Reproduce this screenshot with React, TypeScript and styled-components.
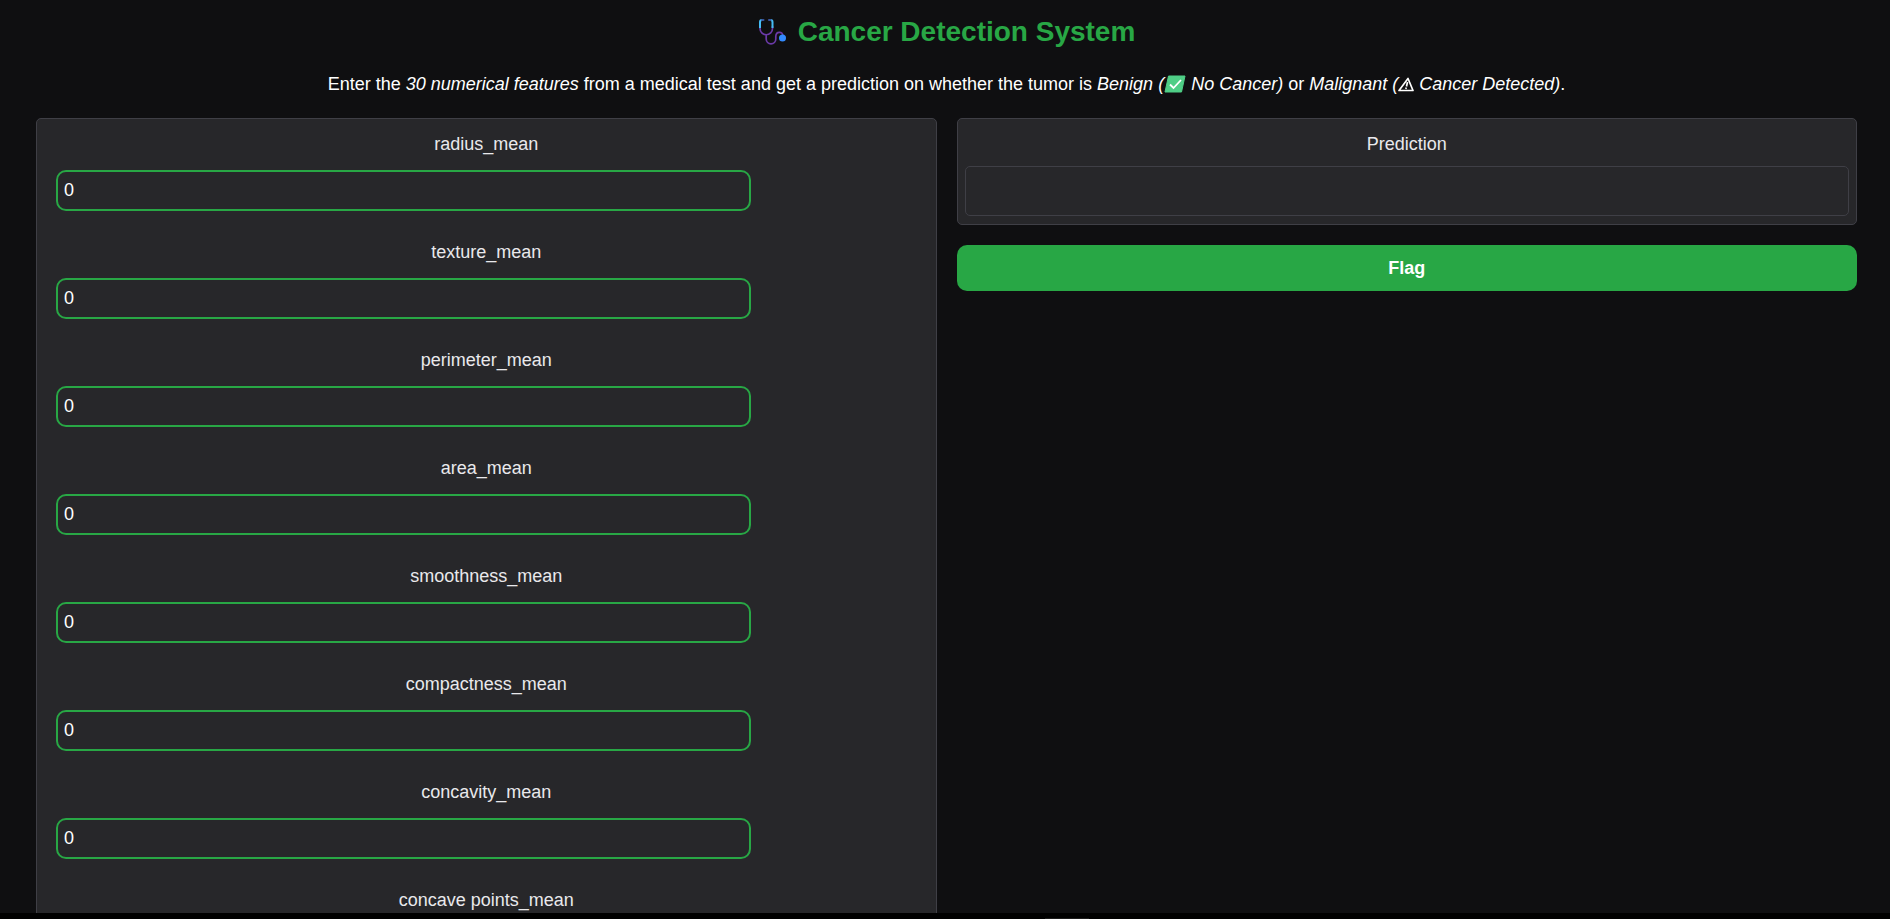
import React from "react";
import styled, { createGlobalStyle } from "styled-components";

const GlobalStyle = createGlobalStyle`
  *, *::before, *::after { box-sizing: border-box; }
  body {
    margin: 0;
    background: #000;
    color: #fff;
    font-family: "Liberation Sans", Arial, sans-serif;
  }
`;

const Shell = styled.div`
  display: flex;
  flex-direction: column;
  height: 100vh;
`;

const Page = styled.main`
  flex: 1;
  min-height: 0;
  overflow-y: auto;
  scrollbar-width: none;
  padding: 12px 33px 0 36px;
  background: #0f0f11;
`;

const BottomBar = styled.footer`
  display: flex;
  flex: none;
  align-items: flex-end;
  justify-content: center;
  height: 6px;
  padding-left: 244px;
  background: #000;
`;

const Handle = styled.span`
  width: 44px;
  height: 1px;
  background: #1c1c1c;
`;

const Title = styled.h1`
  display: flex;
  align-items: center;
  justify-content: center;
  gap: 12px;
  margin: 0;
  color: #28a745;
  font-size: 28px;
  line-height: 40px;
`;

const Intro = styled.p`
  margin: 18px 0 20px;
  font-size: 18px;
  line-height: 28px;
  text-align: center;
`;

const Columns = styled.div`
  display: grid;
  grid-template-columns: 1fr 1fr;
  align-items: start;
  gap: 20px;
`;

const Panel = styled.div`
  border: 1px solid #3f3f46;
  border-radius: 5px;
  background: #27272a;
`;

const FieldList = styled(Panel)`
  display: grid;
  gap: 30px;
  padding: 11px 19px 20px;
`;

const Label = styled.label`
  display: block;
  color: #e9e9ec;
  font-size: 18px;
  line-height: 28px;
  text-align: center;
`;

const NumberInput = styled.input`
  display: block;
  width: calc(80% + 7px);
  height: 41px;
  margin-top: 12px;
  padding: 0 6px;
  border: 2px solid #28a745;
  border-radius: 10px;
  background: #27272a;
  color: #fff;
  font: 18px/28px "Liberation Sans", Arial, sans-serif;
  appearance: textfield;

  &::-webkit-inner-spin-button { display: none; }
`;

const Field = styled.div`
  height: 78px;
`;

const Side = styled.div`
  display: grid;
  gap: 20px;
`;

const Result = styled(Panel)`
  padding: 11px 7px 8px;
`;

const Output = styled.input`
  display: block;
  width: 100%;
  height: 50px;
  margin-top: 8px;
  padding: 0 12px;
  border: 1px solid #3f3f46;
  border-radius: 5px;
  background: #27272a;
  color: #fff;
  font: 18px/28px "Liberation Sans", Arial, sans-serif;
`;

const FlagButton = styled.button`
  height: 46px;
  border: 0;
  border-radius: 10px;
  background: #28a745;
  color: #fff;
  font: bold 18px/28px "Liberation Sans", Arial, sans-serif;
  cursor: pointer;
`;

const InlineIcon = styled.svg`
  vertical-align: -3px;
`;

const Stethoscope = () => (
  <svg width="28" height="28" viewBox="0 0 28 28" fill="none" aria-hidden="true">
    <path d="M2 8v2.500a6 6 0 0 0 12.500 0V8M8.200 16.500V21a4.800 4.800 0 0 0 9.600 0V18.500C17.800 13 25 13 24.800 18" stroke="#6b3aa8" strokeWidth="1.700" />
    <path d="M2 10V4Q2 2 4 2M14.500 10V4Q14.500 2 12.500 2" stroke="#45bdf5" strokeWidth="2" />
    <path d="M4 2H5.500M12.500 2H11" stroke="#3a559c" strokeWidth="2" strokeLinecap="round" />
    <circle cx="24.500" cy="20" r="3.500" fill="#338bff" />
  </svg>
);

const CheckMark = () => (
  <InlineIcon width="22" height="18" viewBox="0 0 22 18" fill="none" aria-hidden="true">
    <path d="M4.500 1H21L17.500 17H1Z" fill="#4fce86" stroke="#4fce86" strokeLinejoin="round" />
    <path d="M6 9.500L9.500 13L17 5" stroke="#fff" strokeWidth="1.800" />
  </InlineIcon>
);

const Warning = () => (
  <InlineIcon width="16" height="16" viewBox="1 0 16 16" fill="none" aria-hidden="true">
    <path d="M11 1.500L16 13.500H2Z" stroke="#fff" strokeWidth="1.700" strokeLinejoin="round" />
    <path d="M10.500 5L9.500 9.500M9.200 10.500L8.900 12" stroke="#fff" strokeWidth="1.700" />
  </InlineIcon>
);

const features = [
  "radius_mean",
  "texture_mean",
  "perimeter_mean",
  "area_mean",
  "smoothness_mean",
  "compactness_mean",
  "concavity_mean",
  "concave points_mean",
];

export default function App() {
  return (
    <Shell>
      <GlobalStyle />
      <Page>
        <Title>
          <Stethoscope />
          Cancer Detection System
        </Title>
        <Intro>
          Enter the <em>30 numerical features</em> from a medical test and get a prediction on
          whether the tumor is <em>Benign (<CheckMark /> No Cancer)</em> or{" "}
          <em>Malignant (<Warning /> Cancer Detected)</em>.
        </Intro>
        <Columns>
          <FieldList as="form">
            {features.map((name, index) => (
              <Field key={name}>
                <Label htmlFor={`feature-${index}`}>{name}</Label>
                <NumberInput id={`feature-${index}`} type="number" defaultValue={0} />
              </Field>
            ))}
          </FieldList>
          <Side>
            <Result>
              <Label htmlFor="prediction">Prediction</Label>
              <Output id="prediction" readOnly />
            </Result>
            <FlagButton type="button">Flag</FlagButton>
          </Side>
        </Columns>
      </Page>
      <BottomBar>
        <Handle />
      </BottomBar>
    </Shell>
  );
}
